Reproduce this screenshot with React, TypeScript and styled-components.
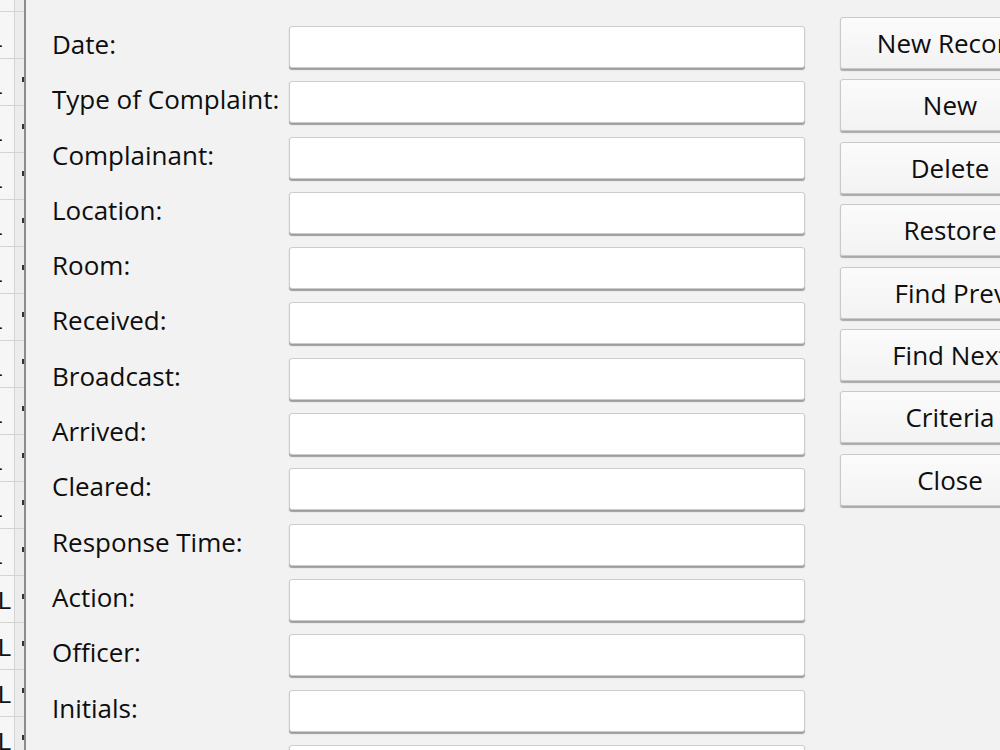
import styled, { createGlobalStyle } from "styled-components";

const GlobalStyle = createGlobalStyle`
  html, body {
    margin: 0;
    padding: 0;
    overflow: hidden;
    background: #f2f2f2;
  }
`;

const fields = [
  "Date:",
  "Type of Complaint:",
  "Complainant:",
  "Location:",
  "Room:",
  "Received:",
  "Broadcast:",
  "Arrived:",
  "Cleared:",
  "Response Time:",
  "Action:",
  "Officer:",
  "Initials:",
  "Notes:",
];

// label plus how far the text sits right of centre
const buttons: [string, number][] = [
  ["New Record", 0],
  ["New", 0],
  ["Delete", 0],
  ["Restore", 0],
  ["Find Previous", 52],
  ["Find Next", 0],
  ["Criteria", 0],
  ["Close", 0],
];

// spreadsheet cells peeking out behind the dialog
const sheetRows = [
  "", "-", "-", "-", "-", "-", "-", "-", "-", "-", "-", "-", "-", "L", "L", "L", "L",
];

const Page = styled.div`
  display: flex;
  width: 1000px;
  height: 750px;
  overflow: hidden;
  font-family: "Open Sans", "Noto Sans", sans-serif;
  color: #0e0e0e;
`;

const Sheet = styled.div`
  width: 24px;
  flex-shrink: 0;
  display: flex;
  flex-direction: column;
  background: #f6f6f6;
  border-right: 2px solid #8c8c8c;
  overflow: hidden;
`;

const SheetRow = styled.div<{ $first?: boolean }>`
  height: ${(p) => (p.$first ? 12 : 47)}px;
  flex-shrink: 0;
  display: flex;
  border-bottom: 1px solid #d4d4d4;
  box-sizing: border-box;
`;

const SheetCell = styled.div<{ $clip?: boolean }>`
  width: 15px;
  border-right: 1px solid #d4d4d4;
  display: flex;
  align-items: flex-end;
  overflow: hidden;
  font-family: "Liberation Sans", sans-serif;
  font-size: ${(p) => (p.$clip ? 20 : 24)}px;
  line-height: 1;
  padding-bottom: ${(p) => (p.$clip ? 3 : 9)}px;
  box-sizing: border-box;
  color: #111;
  text-indent: ${(p) => (p.$clip ? -4 : -2)}px;
`;

const SheetEdge = styled.div`
  flex: 1;
  position: relative;
  background: #ececec;
`;

const Tick = styled.span`
  position: absolute;
  right: 0;
  top: 18px;
  width: 2px;
  height: 5px;
  background: #333;
`;

const Dialog = styled.div`
  flex: 1;
  display: flex;
  padding: 0 0 0 26px;
  background: #f2f2f2;
`;

const Form = styled.div`
  display: grid;
  grid-template-columns: 237px 516px;
  grid-auto-rows: 42px;
  row-gap: 13.3px;
  padding-top: 26px;
  align-content: start;
`;

const Label = styled.label`
  font-size: 26px;
  line-height: 42px;
  white-space: nowrap;
  margin-top: -3px;
`;

const Field = styled.div`
  background: #ffffff;
  border: 1px solid #cdcdcd;
  border-radius: 3px;
  box-shadow: 0 1.5px 1px rgba(0, 0, 0, 0.35);
  box-sizing: border-box;
`;

const ButtonColumn = styled.div`
  display: flex;
  flex-direction: column;
  gap: 10.4px;
  margin-left: 35px;
  padding-top: 17px;
`;

const Button = styled.div<{ $shift: number }>`
  width: 220px;
  height: 52px;
  flex-shrink: 0;
  box-sizing: border-box;
  display: flex;
  align-items: center;
  justify-content: center;
  padding-left: ${(p) => p.$shift}px;
  background: linear-gradient(#fbfbfb, #f3f3f3);
  border: 1px solid #c9c9c9;
  border-radius: 3px;
  box-shadow: 0 1.5px 1px rgba(0, 0, 0, 0.3);
  font-size: 26px;
  color: #0e0e0e;
  white-space: nowrap;
`;

export default function App() {
  return (
    <>
      <GlobalStyle />
      <Page>
        <Sheet>
          {sheetRows.map((t, i) => (
            <SheetRow key={i} $first={i === 0}>
              <SheetCell $clip={t !== "L"}>{t}</SheetCell>
              <SheetEdge>{i > 1 && <Tick />}</SheetEdge>
            </SheetRow>
          ))}
        </Sheet>
        <Dialog>
          <Form>
            {fields.map((f) => [
              <Label key={f + "-l"}>{f}</Label>,
              <Field key={f + "-f"} />,
            ])}
          </Form>
          <ButtonColumn>
            {buttons.map(([b, shift]) => (
              <Button key={b} $shift={shift}>
                {b}
              </Button>
            ))}
          </ButtonColumn>
        </Dialog>
      </Page>
    </>
  );
}
